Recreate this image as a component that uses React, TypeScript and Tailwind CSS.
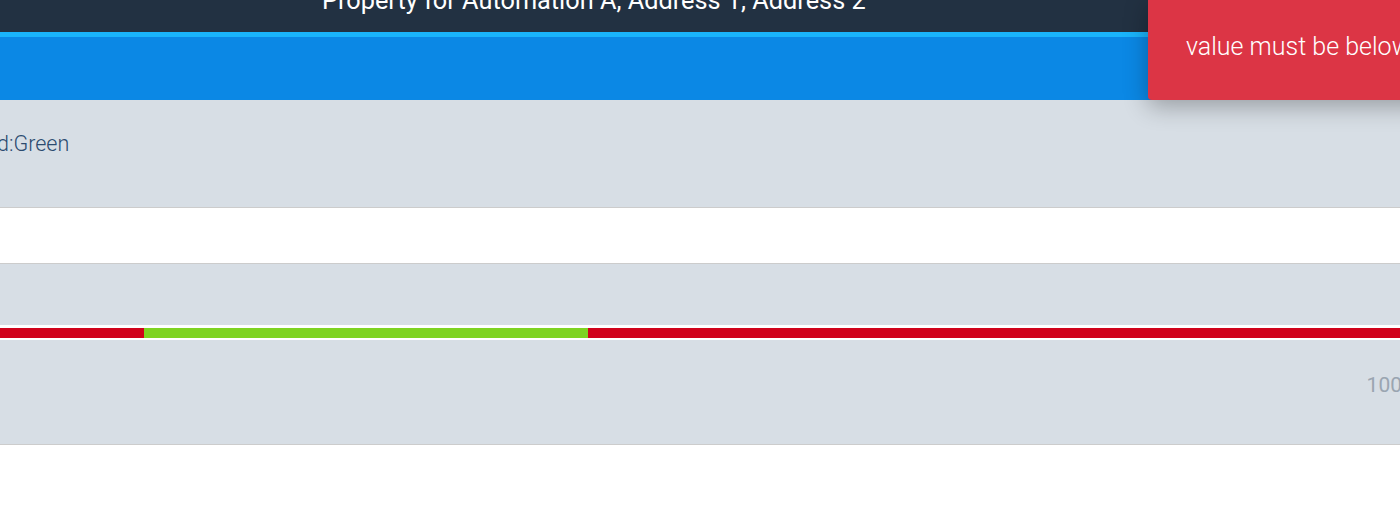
export default function App() {
  return (
    <div className="relative h-[522px] w-[1400px] overflow-hidden bg-white font-['Roboto',sans-serif]">
      {/* header */}
      <div className="flex h-8 items-start bg-[#223142]">
        <div className="-mt-[14px] ml-[322px] whitespace-nowrap text-[25.3px] leading-[30px] text-white">
          Property for Automation A, Address 1, Address 2
        </div>
      </div>
      <div className="h-[5px] bg-[#1ab4fb]" />
      <div className="h-[63px] bg-[#0b88e5]" />

      {/* status row */}
      <div className="flex h-[108px] items-start border-b border-[#cccccc] bg-[#d7dee5] pt-[32px]">
        <span className="-ml-[3px] whitespace-nowrap text-[21.5px] leading-[24px] font-light text-[#2b4b70]">
          d:Green
        </span>
      </div>
      <div className="h-[55px]" />

      {/* range block */}
      <div className="border-t border-[#cccccc]">
        <div className="h-[61px] bg-[#d7dee5]" />
        <div className="h-[3px] bg-white" />
        <div className="flex h-[10px]">
          <div className="w-[144px] bg-[#d0021b]" />
          <div className="w-[444px] bg-[#7ed321]" />
          <div className="flex-1 bg-[#d0021b]" />
        </div>
        <div className="h-[2px] bg-white" />
        <div className="flex h-[105px] items-start justify-end border-b border-[#cccccc] bg-[#d7dee5] pt-[33px]">
          <span className="-mr-[2px] whitespace-nowrap text-[21px] leading-[24px] text-[#9aa5b1]">100</span>
        </div>
      </div>

      {/* toast */}
      <div className="absolute left-[1148px] top-0 flex h-[100px] w-[300px] items-center rounded-bl-[4px] bg-[#dc3545] pl-[38px] shadow-[0_6px_24px_rgba(0,0,0,0.3)]">
        <span className="-mt-[6px] whitespace-nowrap text-[25px] font-light text-white">value must be below</span>
      </div>
    </div>
  );
}
